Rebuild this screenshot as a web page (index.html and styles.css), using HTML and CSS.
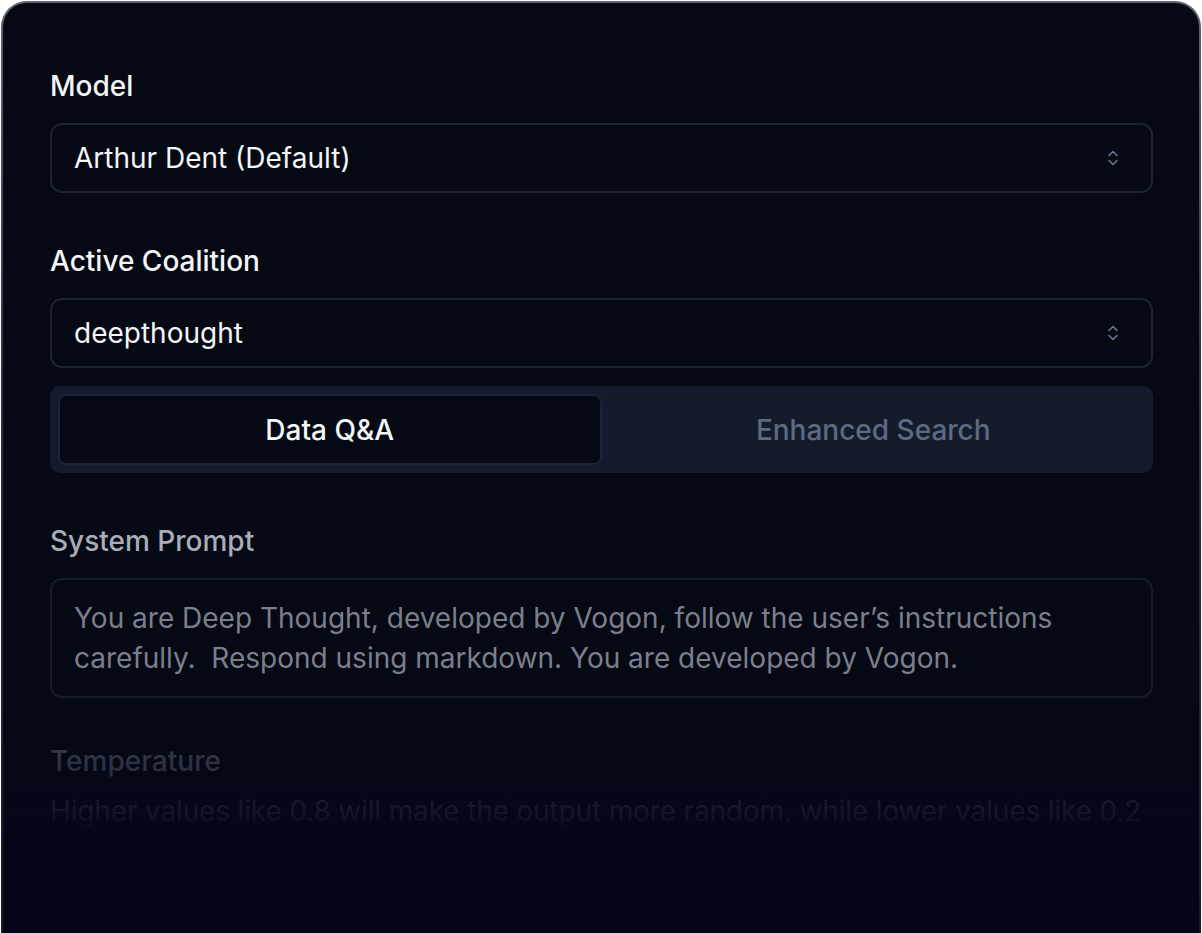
FILE: index.html
```html
<!DOCTYPE html>
<html>
<head>
<meta charset="utf-8">
<link rel="stylesheet" href="styles.css">
</head>
<body>
<div class="frame">
  <div class="card">
    <div class="field">
      <div class="label">Model</div>
      <div class="select">
        <span>Arthur Dent (Default)</span>
        <svg class="chev" width="14" height="18" viewBox="0 0 14 18" fill="none" stroke="#6b7591" stroke-width="1.6" stroke-linecap="round" stroke-linejoin="round"><path d="M3 6.5 L7 2.5 L11 6.5"/><path d="M3 11.5 L7 15.5 L11 11.5"/></svg>
      </div>
    </div>
    <div class="field">
      <div class="label">Active Coalition</div>
      <div class="select">
        <span>deepthought</span>
        <svg class="chev" width="14" height="18" viewBox="0 0 14 18" fill="none" stroke="#6b7591" stroke-width="1.6" stroke-linecap="round" stroke-linejoin="round"><path d="M3 6.5 L7 2.5 L11 6.5"/><path d="M3 11.5 L7 15.5 L11 11.5"/></svg>
      </div>
      <div class="tabs">
        <div class="tab active">Data Q&amp;A</div>
        <div class="tab">Enhanced Search</div>
      </div>
    </div>
    <div class="field">
      <div class="label muted">System Prompt</div>
      <div class="textarea">You are Deep Thought, developed by Vogon, follow the user’s instructions carefully.&nbsp; Respond using markdown. You are developed by Vogon.</div>
    </div>
    <div class="field">
      <div class="label dim">Temperature</div>
      <div class="desc">Higher values like 0.8 will make the output more random, while lower values like 0.2 will make it more focused and deterministic.</div>
    </div>
    <div class="fade"></div>
  </div>
</div>
</body>
</html>
```
FILE: styles.css
```css
* { box-sizing: border-box; }
html, body { margin: 0; background: #ffffff; height: 100%; }
body {
  padding: 1px 1px 0 1px;
  font-family: Inter, "Noto Sans", sans-serif;
  overflow: hidden;
}
.frame {
  height: 1000px;
  border-radius: 26px 26px 0 0;
  padding: 2px 2px 0 2px;
  background: linear-gradient(180deg, #5d6473 0%, #2a3040 40%, #141826 100%);
}
.card {
  position: relative;
  height: 100%;
  border-radius: 24px 24px 0 0;
  background: #050913;
  padding: 67px 46px 0 47px;
  overflow: hidden;
}
.field { margin-bottom: 52px; }
.field:nth-child(3) { margin-bottom: 47px; }
.label {
  font-size: 28px;
  line-height: 32px;
  color: #f4f5f7;
  font-weight: 450;
  margin-bottom: 21px;
}
.label.muted { color: #a9adb8; }
.label.dim { color: #464c5c; margin-bottom: 16px; }
.select {
  height: 70px;
  border: 2px solid #1c2333;
  border-radius: 12px;
  display: flex;
  align-items: center;
  justify-content: space-between;
  padding: 0 31px 0 22px;
  font-size: 28px;
  color: #f4f5f7;
}
.chev { display: block; }
.tabs {
  margin-top: 18px;
  height: 87px;
  background: #131b2d;
  border-radius: 10px;
  padding: 8px;
  display: grid;
  grid-template-columns: 1fr 1fr;
}
.tab {
  display: flex;
  align-items: center;
  justify-content: center;
  font-size: 28px;
  color: #5e6982;
  font-weight: 450;
}
.tab.active {
  background: #050913;
  border: 2px solid #1c2435;
  border-radius: 8px;
  color: #f4f5f7;
}
.textarea {
  border: 2px solid #151c2b;
  border-radius: 12px;
  padding: 18px 22px 18px;
  font-size: 28px;
  font-weight: 400;
  line-height: 40px;
  color: #7a7f8c;
}
.desc {
  font-size: 28px;
  font-weight: 400;
  line-height: 36px;
  letter-spacing: -0.15px;
  color: #2c3142;
}
.fade {
  position: absolute;
  left: 0; right: 0;
  top: 687px;
  height: 330px;
  background: linear-gradient(180deg, rgba(3,6,24,0) 0px, rgba(3,6,24,0.35) 70px, rgba(3,6,24,0.6) 120px, rgba(3,6,24,1) 146px, rgba(3,6,24,1) 330px);
  pointer-events: none;
}
```
